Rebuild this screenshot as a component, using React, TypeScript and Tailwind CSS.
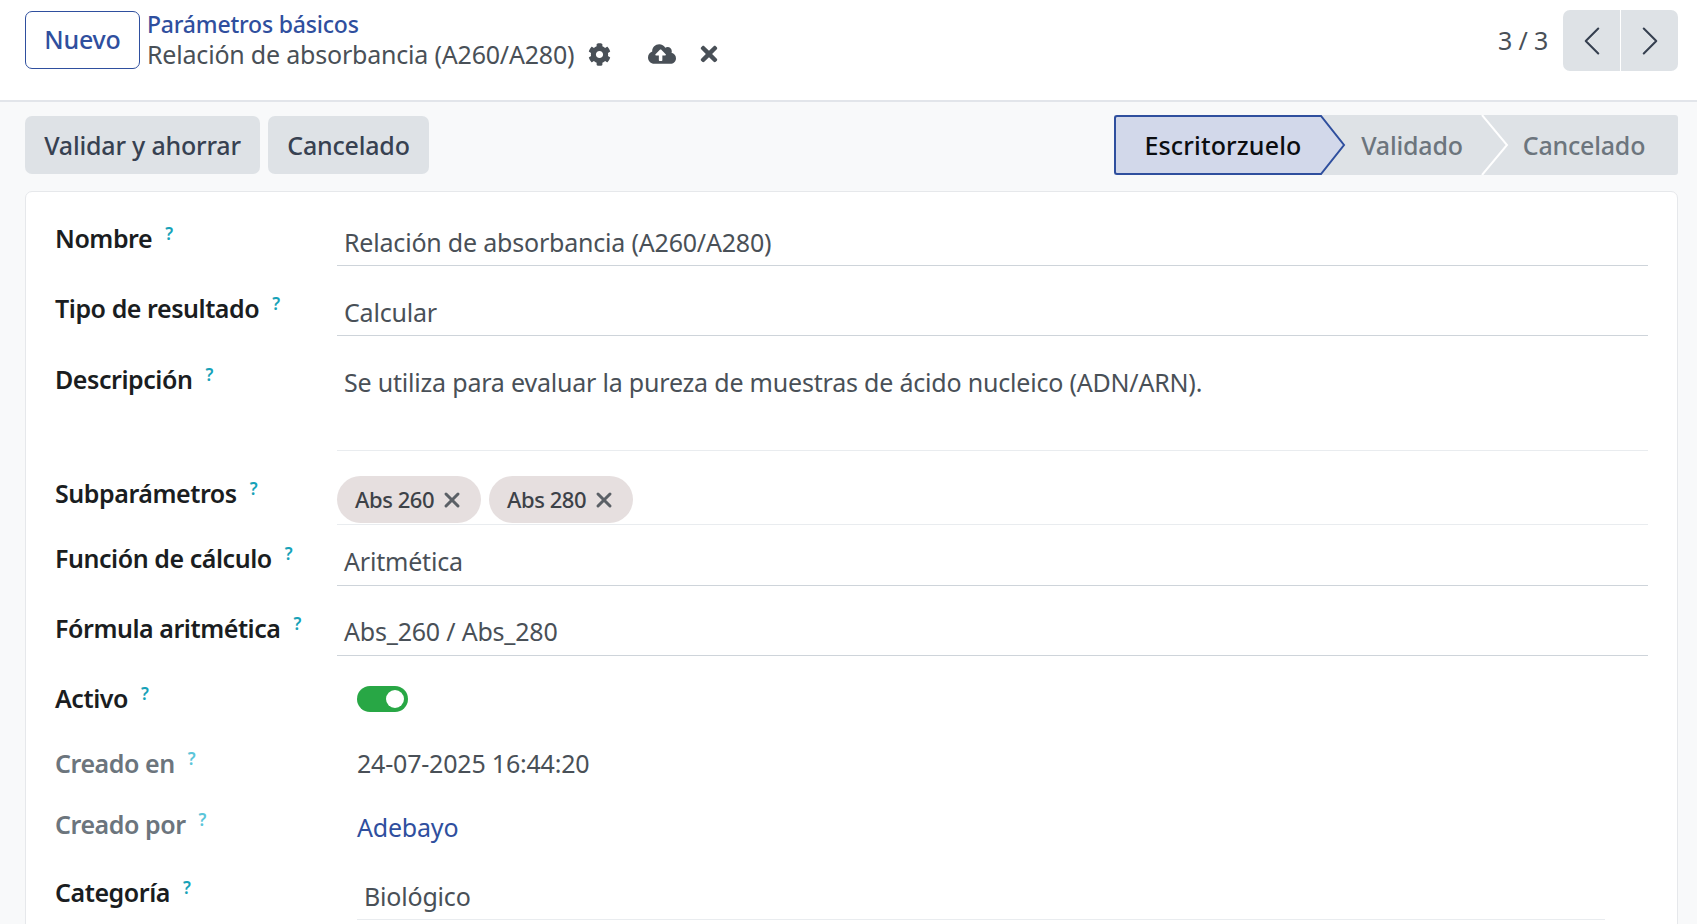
import { ChevronLeft, ChevronRight, X } from 'lucide-react';
import { FaCog, FaCloudUploadAlt, FaTimes } from 'react-icons/fa';
import type { ReactNode } from 'react';

const Label = ({ text, muted, pad }: { text: string; muted?: boolean; pad: string }) => (
	<div className={`w-[311px] shrink-0 pl-[29px] h-[64px] ${pad}`}>
		<span className={`text-[25px] leading-[34px] font-semibold tracking-[-0.45px] ${muted ? 'text-[#6c757d]' : 'text-[#1a1d21]'}`}>
			{text}
		</span>
		<sup className={`ml-[13px] text-[17px] font-semibold ${muted ? 'text-[#5bc5d9]' : 'text-[#17a2b8]'}`}>?</sup>
	</div>
);

const Row = ({ height, label, muted, pad, children }: { height: string; label: string; muted?: boolean; pad: string; children: ReactNode }) => (
	<div className={`flex ${height}`}>
		<Label text={label} muted={muted} pad={pad} />
		{children}
	</div>
);

const Field = ({ children, pad }: { children: ReactNode; pad: string }) => (
	<div className={`flex-1 mr-[29px] border-b border-[#ced4da] pl-[7px] text-[25px] leading-[34px] text-[#495057] ${pad}`}>
		{children}
	</div>
);

const Chip = ({ text }: { text: string }) => (
	<span className="flex items-center h-[47px] rounded-full bg-[#e6dfdf] pl-[18px] pr-[17px] gap-[6px] text-[22px] font-medium tracking-[-0.45px] text-[#3d4248]">
		{text}
		<X size={24} strokeWidth={3} className="text-[#5b6066]" />
	</span>
);

export default function App() {
	return (
		<div className="h-[924px] overflow-hidden bg-[#f8f9fa] font-['Noto_Sans',sans-serif] tracking-[-0.2px]">
			<header className="flex h-[102px] items-start justify-between border-b-2 border-[#e2e5ea] bg-white pl-[25px] pr-[19px]">
				<div className="flex items-start pt-[11px]">
					<button className="flex h-[58px] w-[115px] items-center justify-center rounded-[7px] border border-[#2f4f9e] text-[25px] font-medium text-[#2f4f9e]">
						Nuevo
					</button>
					<div className="ml-[7px]">
						<div className="text-[23px] leading-[26px] font-medium text-[#2f4f9e]">Parámetros básicos</div>
						<div className="mt-[1px] flex items-center text-[25px] leading-[32px] text-[#495057]">
							Relación de absorbancia (A260/A280)
							<FaCog size={23} className="ml-[14px]" />
							<FaCloudUploadAlt size={28} className="ml-[37px]" />
							<FaTimes size={24} className="ml-[21px]" />
						</div>
					</div>
				</div>
				<div className="flex items-center pt-[10px]">
					<span className="mr-[15px] text-[25px] text-[#495057]">3 / 3</span>
					<div className="flex h-[61px] overflow-hidden rounded-[7px]">
						<button className="flex w-[57px] items-center justify-center bg-[#dee2e6] text-[#374151]">
							<ChevronLeft size={50} strokeWidth={1} />
						</button>
						<button className="ml-[1px] flex w-[57px] items-center justify-center bg-[#dee2e6] text-[#374151]">
							<ChevronRight size={50} strokeWidth={1} />
						</button>
					</div>
				</div>
			</header>

			<div className="flex h-[60px] items-center justify-between mt-[13px] pl-[25px] pr-[19px]">
				<div className="flex gap-[8px]">
					<button className="h-[58px] w-[235px] rounded-[7px] bg-[#dee2e6] pt-[1px] text-[25px] font-medium text-[#374151]">Validar y ahorrar</button>
					<button className="h-[58px] w-[161px] rounded-[7px] bg-[#dee2e6] pt-[1px] text-[25px] font-medium text-[#374151]">Cancelado</button>
				</div>
				<div className="flex h-[60px] w-[564px] rounded-[3px] bg-[#dee2e6] pt-[1px] text-[25px] font-medium text-[#6c757d]">
					<div className="relative -mt-[1px] flex w-[206px] items-center justify-center rounded-l-[3px] border-y-2 border-l-2 border-[#2f4f9e] bg-[#d2d8ea] pl-[10px] pt-[1px] font-medium tracking-[0.15px] text-[#0b0d10]">
						Escritorzuelo
						<svg className="absolute left-full top-[-2px]" width="26" height="60" viewBox="0 0 26 60">
							<path d="M0 0 L1 0 L25 30 L1 60 L0 60 Z" fill="#d2d8ea" />
							<path d="M0 1 L1 1 L24 30 L1 59 L0 59" fill="none" stroke="#2f4f9e" strokeWidth="2" />
						</svg>
					</div>
					<div className="relative flex w-[161px] items-center justify-center pl-[23px]">
						Validado
						<svg className="absolute right-[-28px] top-[-1px]" width="28" height="60" viewBox="0 0 28 60">
							<path d="M1 0 L26 30 L1 60" fill="none" stroke="#ffffff" strokeWidth="2" />
						</svg>
					</div>
					<div className="flex flex-1 items-center justify-center pl-[9px]">Cancelado</div>
				</div>
			</div>

			<div className="mt-[16px] ml-[25px] mr-[19px] h-[800px] rounded-t-[7px] border border-[#e6e8eb] bg-white pt-[3px]">
				<Row height="h-[71px]" label="Nombre" pad="pt-[26px]">
					<Field pad="pt-[30px]">Relación de absorbancia (A260/A280)</Field>
				</Row>
				<Row height="h-[70px]" label="Tipo de resultado" pad="pt-[25px]">
					<Field pad="pt-[29px]">Calcular</Field>
				</Row>
				<Row height="h-[115px]" label="Descripción" pad="pt-[26px]">
					<div className="flex-1 mr-[29px] border-b border-[#e9ecef] pl-[7px] pt-[29px] text-[25px] leading-[34px] text-[#495057]">
						Se utiliza para evaluar la pureza de muestras de ácido nucleico (ADN/ARN).
					</div>
				</Row>
				<Row height="h-[74px]" label="Subparámetros" pad="pt-[25px]">
					<div className="flex flex-1 mr-[29px] gap-[8px] border-b border-[#e9ecef] pt-[25px]">
						<Chip text="Abs 260" />
						<Chip text="Abs 280" />
					</div>
				</Row>
				<Row height="h-[61px]" label="Función de cálculo" pad="pt-[16px]">
					<Field pad="pt-[19px]">Aritmética</Field>
				</Row>
				<Row height="h-[70px]" label="Fórmula aritmética" pad="pt-[25px]">
					<Field pad="pt-[28px]">Abs_260 / Abs_280</Field>
				</Row>
				<Row height="h-[69px]" label="Activo" pad="pt-[25px]">
					<div className="pl-[20px] pt-[30px]">
						<div className="flex h-[26px] w-[51px] items-center justify-end rounded-full bg-[#28a745] pr-[4px]">
							<div className="h-[18px] w-[18px] rounded-full bg-white" />
						</div>
					</div>
				</Row>
				<Row height="h-[64px]" label="Creado en" muted pad="pt-[21px]">
					<div className="pl-[20px] pt-[21px] text-[25px] leading-[34px] text-[#495057]">24-07-2025 16:44:20</div>
				</Row>
				<Row height="h-[62px]" label="Creado por" muted pad="pt-[18px]">
					<div className="pl-[20px] pt-[21px] text-[25px] leading-[34px] text-[#2f4f9e]">Adebayo</div>
				</Row>
				<Row height="h-[69px]" label="Categoría" pad="pt-[24px]">
					<div className="flex-1 ml-[20px] mr-[72px] border-b border-[#e9ecef] pl-[7px] pt-[28px] text-[25px] leading-[34px] text-[#495057]">Biológico</div>
				</Row>
			</div>
		</div>
	);
}
